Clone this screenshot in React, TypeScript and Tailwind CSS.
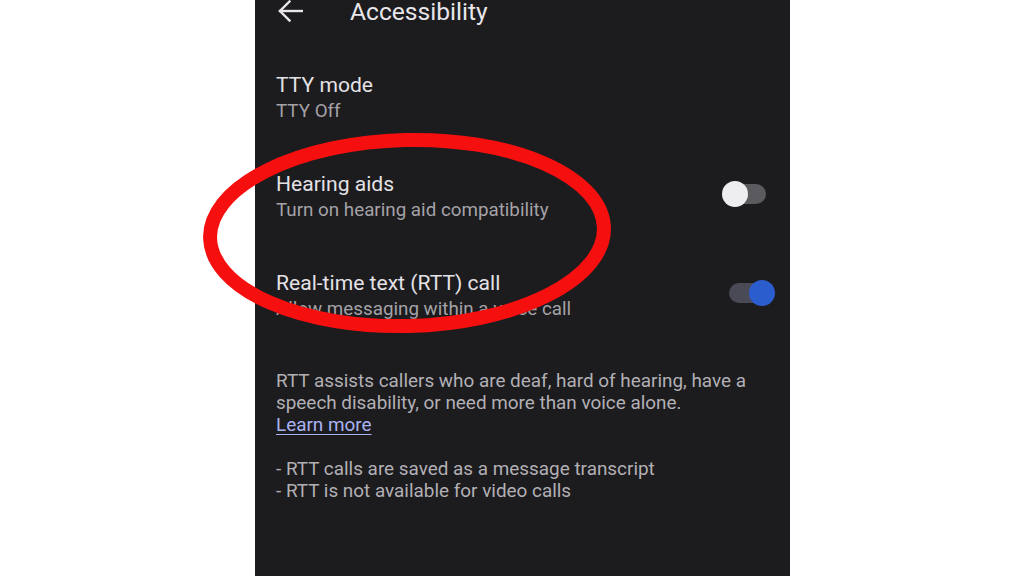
import React from "react";

function Toggle({ on }: { on: boolean }) {
  return (
    <div className="relative w-[53px] h-[26px] mb-[6px] shrink-0">
      <div
        className={
          on
            ? "absolute left-[7px] top-[3px] w-[37px] h-[20px] rounded-full bg-[#4a4a57]"
            : "absolute left-[7px] top-[3px] w-[37px] h-[20px] rounded-full bg-[#5b5a5f]"
        }
      />
      <div
        className={
          on
            ? "absolute left-[27px] top-0 w-[26px] h-[26px] rounded-full bg-[#2b5dcf]"
            : "absolute left-0 top-0 w-[26px] h-[26px] rounded-full bg-[#eeedf0]"
        }
      />
    </div>
  );
}

function Item({
  title,
  sub,
  toggle,
}: {
  title: string;
  sub: string;
  toggle?: "on" | "off";
}) {
  return (
    <div className="flex items-center">
      <div className="flex-1 flex flex-col">
        <div className="text-[21.1px] leading-[26px] text-[#e4e2e6] whitespace-nowrap">
          {title}
        </div>
        <div className="text-[18.8px] leading-[26px] text-[#a4a2a7] whitespace-nowrap">
          {sub}
        </div>
      </div>
      {toggle && <Toggle on={toggle === "on"} />}
    </div>
  );
}

export default function App() {
  return (
    <div
      className="relative w-[1024px] h-[576px] bg-white flex overflow-hidden"
      style={{ fontFamily: "Roboto, 'Noto Sans', Arial, sans-serif" }}
    >
      <div className="ml-[255px] w-[535px] h-full bg-[#1c1b1e] flex flex-col pl-[21px] pr-[15px]">
        <div className="flex items-center h-[24px]">
          <svg
            width="26"
            height="24"
            viewBox="0 0 26 24"
            className="ml-[1px] -mt-[2px] shrink-0"
            fill="none"
            stroke="#e8e6ea"
            strokeWidth="2.4"
            strokeLinecap="square"
          >
            <line x1="3" y1="12" x2="25" y2="12" />
            <polyline points="12.5,2.5 3,12 12.5,21.5" strokeLinejoin="miter" />
          </svg>
          <div className="ml-[47px] text-[24.6px] leading-[24px] text-[#e8e6ea] whitespace-nowrap">
            Accessibility
          </div>
        </div>

        <div className="mt-[48px] flex flex-col gap-[47px]">
          <Item title="TTY mode" sub="TTY Off" />
          <Item
            title="Hearing aids"
            sub="Turn on hearing aid compatibility"
            toggle="off"
          />
          <Item
            title="Real-time text (RTT) call"
            sub="Allow messaging within a voice call"
            toggle="on"
          />
        </div>

        <div className="mt-[48px] text-[18.9px] leading-[22px] text-[#b2b0b5] whitespace-nowrap">
          <div>RTT assists callers who are deaf, hard of hearing, have a</div>
          <div>speech disability, or need more than voice alone.</div>
          <div>
            <span className="text-[#a9b3f2] underline underline-offset-[3px]">
              Learn more
            </span>
          </div>
          <div className="h-[22px]" />
          <div>- RTT calls are saved as a message transcript</div>
          <div>- RTT is not available for video calls</div>
        </div>
      </div>

      <svg
        className="absolute left-0 top-0 pointer-events-none"
        width="1024"
        height="576"
        viewBox="0 0 1024 576"
      >
        <ellipse
          cx="407"
          cy="233"
          rx="197"
          ry="93"
          fill="none"
          stroke="#f5100f"
          strokeWidth="14"
          transform="rotate(-1.5 407 233)"
        />
      </svg>
    </div>
  );
}
